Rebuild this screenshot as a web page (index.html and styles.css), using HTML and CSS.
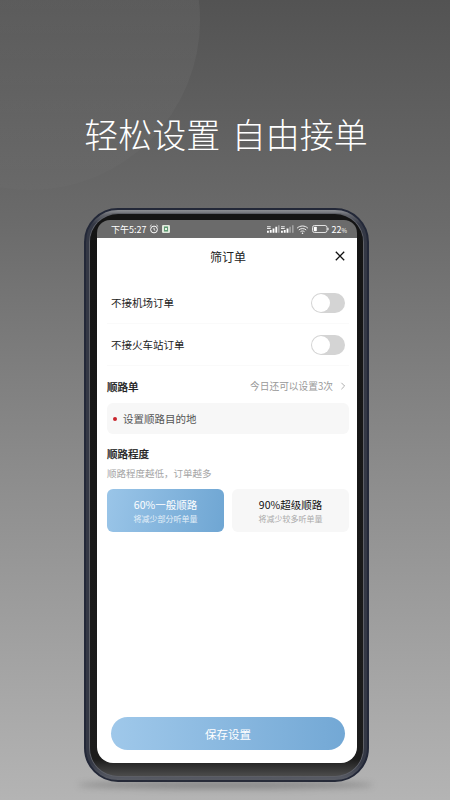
FILE: index.html
```html
<!DOCTYPE html>
<html lang="zh-CN">
<head>
<meta charset="utf-8">
<title>筛订单</title>
<link rel="stylesheet" href="styles.css">
</head>
<body>
<div class="page">
  <div class="blob"></div>
  <h1 class="headline">轻松设置 自由接单</h1>
  <div class="phone">
    <div class="screen">
      <div class="status">
        <div class="status-left">
          <span>下午5:27</span>
          <svg class="ic-alarm" viewBox="0 0 10 10"><circle cx="5" cy="5.5" r="3.4" fill="none" stroke="#fff" stroke-width="1"/><path d="M5 3.8V5.6L6.2 6.4M.8 2.6 2.6.9M9.2 2.6 7.4.9" fill="none" stroke="#fff" stroke-width=".9"/></svg>
          <svg class="ic-app" viewBox="0 0 8 8"><rect width="8" height="8" rx="1.2" fill="#dfe8dc"/><path d="M2 1.5h4v5H2z" fill="#5d9a72"/><path d="M3 3h2v2H3z" fill="#e8efe6"/></svg>
        </div>
        <div class="status-right">
          <svg class="ic-signal" viewBox="0 0 14 8"><path d="M0 1h4v1H0zM0 3h4v1H0z" fill="#eee"/><path d="M0 6h2v2H0zM3 5h2v3H3zM6 3.500h2V8H6zM9 1.500h2V8H9z" fill="#fff"/><path d="M12 0h1.500v8H12z" fill="#aaa"/></svg>
          <svg class="ic-signal" viewBox="0 0 14 8"><path d="M0 1h4v1H0zM0 3h4v1H0z" fill="#eee"/><path d="M0 6h2v2H0zM3 5h2v3H3zM6 3.500h2V8H6z" fill="#fff"/><path d="M9 1.500h1.500V8H9zM12 0h1.500v8H12z" fill="#aaa"/></svg>
          <svg class="ic-wifi" viewBox="0 0 12 9"><path d="M.6 3.200C3.600.3 8.400.3 11.400 3.200M2.300 5C4.300 3.100 7.700 3.100 9.700 5M4 6.700C5.100 5.800 6.900 5.800 8 6.700" fill="none" stroke="#fff" stroke-width=".9"/><circle cx="6" cy="8.200" r=".8" fill="#fff"/></svg>
          <svg class="ic-batt" viewBox="0 0 17 8"><rect x=".5" y=".5" width="14.500" height="7" rx="2" fill="none" stroke="#fff" stroke-width=".8"/><rect x="1.800" y="1.800" width="3" height="4.400" rx=".8" fill="#fff"/><path d="M16 2.800v2.400" stroke="#fff" stroke-width="1"/></svg>
          <span class="batt-num">22<small>%</small></span>
        </div>
      </div>
      <div class="sheet">
        <div class="nav">
          <span class="nav-title">筛订单</span>
          <svg class="ic-close" viewBox="0 0 10 10"><path d="M.8.8 9.200 9.200M9.200.8.8 9.200" stroke="#111" stroke-width="1.300" fill="none"/></svg>
        </div>
        <div class="rows">
          <div class="row"><span>不接机场订单</span><span class="toggle"></span></div>
          <div class="row"><span>不接火车站订单</span><span class="toggle"></span></div>
        </div>
        <div class="section-head">
          <span class="section-title">顺路单</span>
          <span class="section-note">今日还可以设置3次
            <svg class="ic-chev" viewBox="0 0 6 10"><path d="M1 1l4 4-4 4" fill="none" stroke="#999" stroke-width="1"/></svg>
          </span>
        </div>
        <div class="dest"><span class="dot"></span><span>设置顺路目的地</span></div>
        <div class="section-title degree">顺路程度</div>
        <div class="hint">顺路程度越低，订单越多</div>
        <div class="cards">
          <div class="card active"><div class="card-title">60%一般顺路</div><div class="card-sub">将减少部分听单量</div></div>
          <div class="card"><div class="card-title">90%超级顺路</div><div class="card-sub">将减少较多听单量</div></div>
        </div>
        <div class="spacer"></div>
        <div class="save">保存设置</div>
      </div>
    </div>
  </div>
  <div class="floor-shadow"></div>
</div>
</body>
</html>
```
FILE: styles.css
```css
* { box-sizing: border-box; }
html, body { margin: 0; padding: 0; }
body { font-family: "Noto Sans CJK SC", "Noto Sans", sans-serif; }
.page {
  position: relative;
  width: 450px;
  height: 800px;
  overflow: hidden;
  padding-top: 208px;
  background: linear-gradient(180deg, #535353 0%, #6b6b6b 28%, #8f8f8f 62%, #b4b4b4 100%);
}
.blob {
  position: absolute;
  left: -140px;
  top: -150px;
  width: 340px;
  height: 340px;
  border-radius: 50%;
  background: linear-gradient(180deg, rgba(255, 255, 255, .05) 45%, rgba(255, 255, 255, .012) 100%);
}
.headline {
  position: absolute;
  left: 0;
  right: 0;
  top: 111px;
  margin: 0;
  padding-left: 2px;
  text-align: center;
  font-size: 34px;
  line-height: 46px;
  font-weight: 300;
  color: #fff;
  word-spacing: 4px;
}
.phone {
  position: relative;
  width: 285px;
  height: 574px;
  margin-left: 84px;
  padding: 4px;
  border-radius: 34px;
  background: linear-gradient(180deg, #8d8f94 0, #62646b 5px, #343845 14px, #343845 97%, #5c5f68 100%);
  border: 2px solid #232838;
}
.screen {
  height: 100%;
  display: flex;
  flex-direction: column;
  padding: 6px 6px 13px 7px;
  border-radius: 28px;
  background: linear-gradient(180deg, #141414 0, #1c1c1c 97%, #4c4c4c 100%);
  box-shadow: 0 0 0 1px #5e6067;
}
.status {
  flex: none;
  height: 18px;
  display: flex;
  justify-content: space-between;
  align-items: center;
  padding: 0 10px 0 14px;
  border-radius: 13px 13px 0 0;
  background: #6b6b6b;
  color: #fff;
  font-size: 9px;
  line-height: 1;
}
.status-left, .status-right { display: flex; align-items: center; }
.ic-alarm { width: 10px; height: 10px; margin-left: 2px; }
.ic-app { width: 8px; height: 8px; margin-left: 3px; }
.ic-signal { width: 13px; height: 8px; margin-right: 1px; }
.ic-wifi { width: 13px; height: 9px; margin: 0 3px 0 1px; }
.ic-batt { width: 17px; height: 8px; margin-right: 2px; }
.batt-num small { font-size: 6px; }
.sheet {
  flex: 1;
  display: flex;
  flex-direction: column;
  padding: 0 8px 13px 10px;
  background: #fff;
  border-radius: 0 0 16px 16px;
  color: #222;
}
.nav {
  position: relative;
  flex: none;
  height: 37px;
  display: flex;
  align-items: center;
  justify-content: center;
  font-size: 12px;
}
.ic-close { position: absolute; right: 4px; top: 13px; width: 10px; height: 10px; }
.rows { flex: none; margin-top: 7px; }
.row {
  height: 42px;
  display: flex;
  align-items: center;
  justify-content: space-between;
  padding: 0 4px;
  font-size: 10.500px;
  border-bottom: 1px solid #fafafa;
}
.toggle {
  position: relative;
  width: 34px;
  height: 20px;
  border-radius: 10px;
  background: #d4d4d4;
}
.toggle::after {
  content: "";
  position: absolute;
  left: 1px;
  top: 1px;
  width: 18px;
  height: 18px;
  border-radius: 50%;
  background: #fff;
}
.section-head {
  flex: none;
  height: 20px;
  margin-top: 10px;
  display: flex;
  align-items: center;
  justify-content: space-between;
}
.section-title { font-size: 10.500px; font-weight: 500; color: #222; -webkit-text-stroke: .2px #222; }
.section-note { display: flex; align-items: center; font-size: 9.700px; color: #999; }
.ic-chev { width: 6px; height: 8px; margin: 0 3px 0 7px; }
.dest {
  flex: none;
  height: 31px;
  margin: 7px 0 0;
  display: flex;
  align-items: center;
  padding-left: 6px;
  border-radius: 6px;
  background: #f7f7f7;
  font-size: 10.500px;
  color: #555;
}
.dot { width: 4px; height: 4px; margin-right: 6px; border-radius: 50%; background: #c9242c; }
.degree { flex: none; line-height: 16px; margin-top: 12px; }
.hint { flex: none; line-height: 14px; margin-top: 4px; font-size: 9.500px; color: #a5a5a5; }
.cards {
  flex: none;
  display: grid;
  grid-template-columns: 117px 117px;
  gap: 8px;
  margin-top: 9px;
}
.card {
  height: 43px;
  display: flex;
  flex-direction: column;
  align-items: center;
  justify-content: center;
  border-radius: 6px;
  background: #f7f7f7;
  color: #111;
}
.card.active {
  background: linear-gradient(100deg, #9ac5e8, #6fa6d3);
  color: #fff;
}
.card-title { font-size: 10.500px; line-height: 14px; }
.card-sub { font-size: 8px; line-height: 11px; margin-top: 1px; color: #aaa; }
.card.active .card-sub { color: #e4eff8; }
.spacer { flex: 1; }
.save {
  flex: none;
  height: 33px;
  margin: 0 4px;
  display: flex;
  align-items: center;
  justify-content: center;
  border-radius: 17px;
  background: linear-gradient(90deg, #9fc8ea, #73a8d5);
  color: #fff;
  font-size: 11.500px;
}
.floor-shadow {
  position: absolute;
  left: 78px;
  top: 781px;
  width: 295px;
  height: 8px;
  border-radius: 50%;
  background: rgba(60, 60, 60, .35);
  filter: blur(3px);
}
```
